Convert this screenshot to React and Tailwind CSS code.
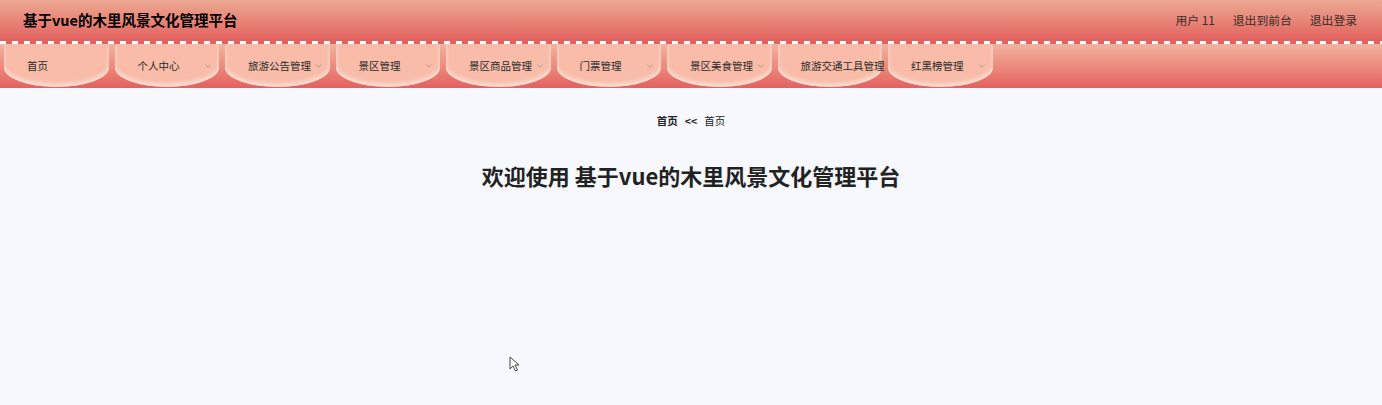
import { ChevronDown } from 'lucide-react';

const menus = [
  { name: '首页', arrow: false },
  { name: '个人中心', arrow: true },
  { name: '旅游公告管理', arrow: true },
  { name: '景区管理', arrow: true },
  { name: '景区商品管理', arrow: true },
  { name: '门票管理', arrow: true },
  { name: '景区美食管理', arrow: true },
  { name: '旅游交通工具管理', arrow: false },
  { name: '红黑榜管理', arrow: true },
];

export default function App() {
  return (
    <div className="relative min-h-[405px] w-full bg-[#f7f8fd] font-['Noto_Sans_CJK_SC','Noto_Sans',sans-serif] text-[#333]">
      {/* top bar */}
      <header className="flex h-[40px] items-center justify-between bg-gradient-to-b from-[#eca892] to-[#e2625f] pl-[23px] pr-[25px]">
        <h1 className="text-[14.5px] font-bold text-black">基于vue的木里风景文化管理平台</h1>
        <div className="flex items-center gap-[18px] text-[11.8px] text-[#3a2a2a]">
          <span>用户 11</span>
          <span>退出到前台</span>
          <span>退出登录</span>
        </div>
      </header>

      {/* dashed strip */}
      <div className="h-[4px] bg-[#e2625f] bg-[repeating-linear-gradient(90deg,#ffffff_0_6px,transparent_6px_12px)] bg-[length:12px_3px]" style={{ backgroundRepeat: 'repeat-x', backgroundPosition: '0 1px' }} />

      {/* nav */}
      <nav className="flex h-[44px] gap-[6px] bg-gradient-to-b from-[#f1b39e] to-[#e4605e] pl-[4px]">
        {menus.map((m) => (
          <div
            key={m.name}
            className="relative flex h-[43px] w-[104.5px] shrink-0 items-center rounded-t-[2px] rounded-b-[50%_45%] bg-[#f8bca8] pl-[23px] text-[10.5px] text-[#2a2a2a] shadow-[inset_0_-3px_4px_rgba(255,255,255,0.55)]"
          >
            <span className="whitespace-nowrap">{m.name}</span>
            {m.arrow && (
              <ChevronDown size={10} strokeWidth={1.5} className="absolute right-[6px] top-1/2 -translate-y-1/2 text-[#9a8078]" />
            )}
          </div>
        ))}
      </nav>

      {/* content */}
      <main className="flex flex-col items-center pt-[25px]">
        <div className="flex items-center gap-[7px] text-[10.5px] text-[#222]">
          <span className="font-bold">首页</span>
          <span className="font-bold">&lt;&lt;</span>
          <span>首页</span>
        </div>
        <h2 className="mt-[30px] text-[22px] font-bold text-[#222]">欢迎使用 基于vue的木里风景文化管理平台</h2>
      </main>

      {/* pointer */}
      <svg className="absolute left-[509px] top-[356px]" width="12" height="17" viewBox="0 0 12 17">
        <path d="M1 1 L1 13 L4 10 L6.5 15 L8.5 14 L6 9 L10 9 Z" fill="#fff" stroke="#444" strokeWidth="1" strokeLinejoin="round" />
      </svg>
    </div>
  );
}
